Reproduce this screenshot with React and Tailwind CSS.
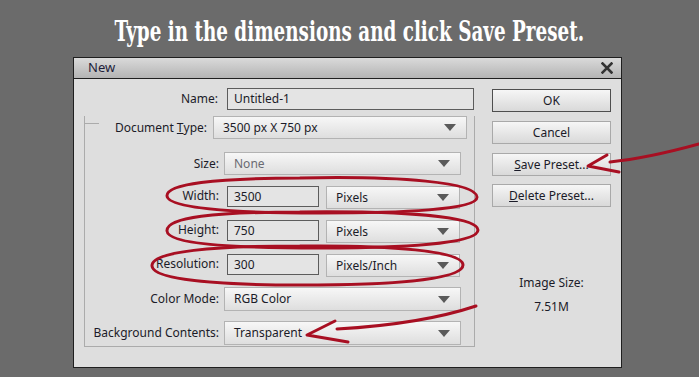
import React from "react";

const ui = { fontFamily: '"Noto Sans", "Open Sans", sans-serif' };

function Caret() {
  return (
    <svg width="12" height="7" viewBox="0 0 12 7" className="shrink-0">
      <path d="M0 0 H12 L6 7 Z" fill="#5a5a5a" />
    </svg>
  );
}

function Select({ value, w, h = "h-[23px]", muted = false }) {
  return (
    <div
      className={`${w} ${h} flex items-center justify-between pl-[9px] pr-[10px] border border-[#b3b3b3] bg-gradient-to-b from-[#f7f7f7] to-[#dedede]`}
    >
      <span className={muted ? "text-[#6a6a72]" : "text-[#1b1b28]"}>{value}</span>
      <Caret />
    </div>
  );
}

function Field({ value, w, h }) {
  return (
    <div className={`${w} ${h} flex items-center pl-[6px] border border-[#5c5c5c] bg-[#e4e4e4] text-[#1b1b28]`}>
      {value}
    </div>
  );
}

function Button({ children, main = false }) {
  return (
    <div
      className={`w-[119px] h-[23px] flex items-center justify-center bg-gradient-to-b from-[#f6f6f6] to-[#d9d9d9] text-[#1b1b28] ${
        main ? "border border-[#4e4e4e]" : "border border-[#a9a9a9]"
      }`}
    >
      {children}
    </div>
  );
}

function UnitRow({ label, value, unit, mt }) {
  return (
    <div className={`flex items-start ${mt}`}>
      <div className="w-[134px] h-[20px] flex items-center justify-end">{label}</div>
      <div className="ml-[8px]">
        <Field value={value} w="w-[92px]" h="h-[21px]" />
      </div>
      <div className="ml-[7px]">
        <Select value={unit} w="w-[134px]" h="h-[23px]" />
      </div>
    </div>
  );
}

export default function App() {
  return (
    <div className="relative w-[699px] h-[377px] overflow-hidden bg-[#6b6b6b]">
      <div className="h-[57px] pt-[16px] flex justify-center">
        <h1
          className="inline-block whitespace-nowrap text-white font-bold text-[27px] leading-[32px] scale-x-[0.68]"
          style={{ fontFamily: '"DejaVu Serif", serif' }}
        >
          Type in the dimensions and click Save Preset.
        </h1>
      </div>

      {/* dialog */}
      <div
        className="ml-[73px] w-[549px] h-[311px] border border-[#1f1f1f] bg-[#dedede] text-[12px] text-[#1b1b28]"
        style={ui}
      >
        <div className="h-[21px] flex items-center justify-between pl-[14px] pr-[8px] border-b border-[#1f1f1f] bg-gradient-to-b from-[#dadada] to-[#b4b4b4]">
          <span className="text-[13px] text-[#1e1e3a]">New</span>
          <svg width="12" height="12" viewBox="0 0 12 12">
            <path d="M1.5 1.5 L10.5 10.5 M10.5 1.5 L1.5 10.5" stroke="#333" strokeWidth="2.6" strokeLinecap="square" />
          </svg>
        </div>

        <div className="flex">
          {/* left column */}
          <div className="w-[401px]">
            <div className="flex items-center mt-[9px]">
              <div className="w-[144px] text-right">Name:</div>
              <div className="ml-[9px]">
                <Field value="Untitled-1" w="w-[247px]" h="h-[22px]" />
              </div>
            </div>

            <div className="ml-[10px] mt-[14px] w-[391px] h-[231px] border-l border-r border-b border-[#ababab]">
              <div className="flex items-start -mt-[8px]">
                <div className="w-[14px] mt-[7px] border-t border-[#ababab]" />
                <div className="w-[108px] h-[23px] flex items-center justify-end">
                  Document <span className="underline ml-[3px]">T</span>ype:
                </div>
                <div className="ml-[6px]">
                  <Select value="3500 px X 750 px" w="w-[254px]" />
                </div>
              </div>

              <div className="flex items-start mt-[13px]">
                <div className="w-[134px] h-[23px] flex items-center justify-end">Size:</div>
                <div className="ml-[5px]">
                  <Select value="None" w="w-[237px]" muted />
                </div>
              </div>

              <UnitRow label="Width:" value="3500" unit="Pixels" mt="mt-[11px]" />
              <UnitRow label="Height:" value="750" unit="Pixels" mt="mt-[11px]" />
              <UnitRow label="Resolution:" value="300" unit="Pixels/Inch" mt="mt-[11px]" />

              <div className="flex items-start mt-[10px]">
                <div className="w-[134px] h-[24px] flex items-center justify-end">Color Mode:</div>
                <div className="ml-[5px]">
                  <Select value="RGB Color" w="w-[237px]" h="h-[24px]" />
                </div>
              </div>

              <div className="flex items-start mt-[10px]">
                <div className="w-[134px] h-[24px] flex items-center justify-end whitespace-nowrap">
                  Background Contents:
                </div>
                <div className="ml-[5px]">
                  <Select value="Transparent" w="w-[237px]" h="h-[24px]" />
                </div>
              </div>
            </div>
          </div>

          {/* right column */}
          <div className="ml-[17px] mt-[10px] flex flex-col">
            <Button main>OK</Button>
            <div className="mt-[9px]">
              <Button>Cancel</Button>
            </div>
            <div className="mt-[9px]">
              <Button>
                <span className="underline">S</span>ave Preset...
              </Button>
            </div>
            <div className="mt-[8px]">
              <Button>
                <span className="underline">D</span>elete Preset...
              </Button>
            </div>
            <div className="mt-[68px] w-[119px] text-center leading-[16px]">Image Size:</div>
            <div className="mt-[8px] w-[119px] text-center leading-[16px]">7.51M</div>
          </div>
        </div>
      </div>

      {/* red hand-drawn annotations */}
      <svg
        className="absolute inset-0 pointer-events-none"
        width="699"
        height="377"
        viewBox="0 0 699 377"
        fill="none"
        stroke="#a80f22"
        strokeWidth="3"
        strokeLinecap="round"
        strokeLinejoin="round"
      >
        <path d="M300 178 C 400 176, 476 182, 477 197 C 478 210, 400 213, 320 213 C 230 213, 168 208, 167 196 C 166 184, 215 178, 300 178" />
        <path d="M300 212 C 400 211, 477 216, 478 230 C 478 244, 400 248, 320 248 C 230 248, 168 244, 167 231 C 166 217, 215 212, 300 212" />
        <path d="M300 246 C 390 245, 463 251, 463 265 C 463 280, 390 285, 300 285 C 220 285, 153 280, 152 266 C 151 251, 215 246, 300 246" />
        <path d="M699 144 C 670 152, 640 159, 610 162" />
        <path d="M607 155 L588 166 L619 172" />
        <path d="M476 306 C 440 318, 390 326, 337 329" />
        <path d="M335 321 L307 335 L348 342" />
      </svg>
    </div>
  );
}
